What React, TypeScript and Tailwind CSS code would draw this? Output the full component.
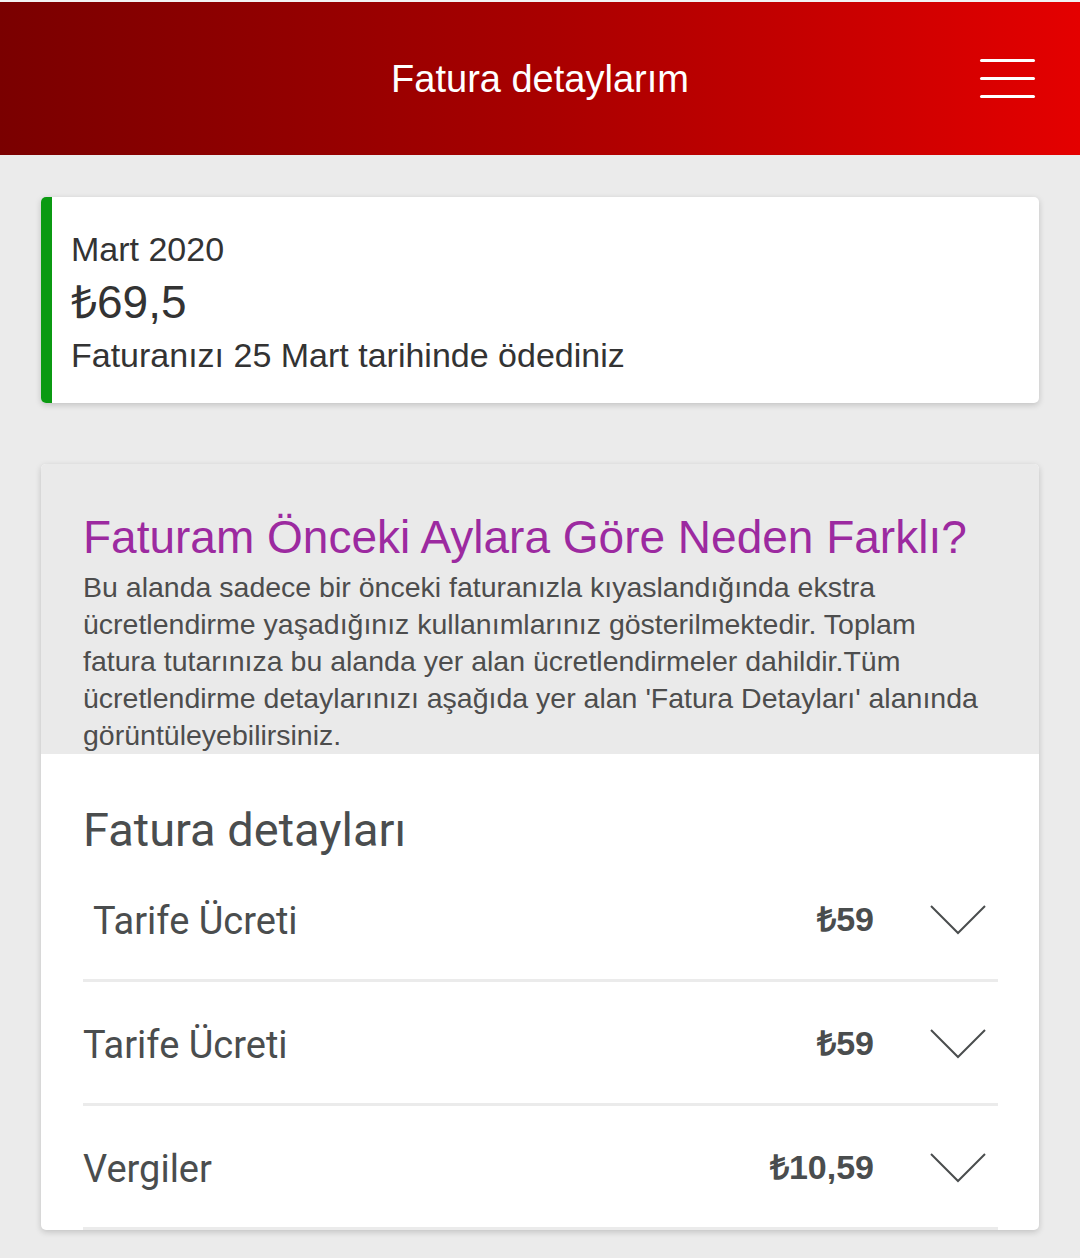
import React from 'react';

const vf = { fontFamily: '"Liberation Sans", Arial, sans-serif' };
const rb = { fontFamily: 'Roboto, "Noto Sans", sans-serif' };

interface Line {
  label: string;
  amount: string;
  indent?: boolean;
}

const lines: Line[] = [
  { label: 'Tarife Ücreti', amount: '₺59', indent: true },
  { label: 'Tarife Ücreti', amount: '₺59' },
  { label: 'Vergiler', amount: '₺10,59' },
];

const MenuIcon = () => (
  <div className="flex flex-col gap-[15px] w-[55px]">
    <span className="block h-[3px] rounded-full bg-white" />
    <span className="block h-[3px] rounded-full bg-white" />
    <span className="block h-[3px] rounded-full bg-white" />
  </div>
);

const Chevron = () => (
  <svg width="56" height="30" viewBox="0 0 56 30" fill="none">
    <path d="M1 1 L28 28 L55 1" stroke="#4a4d4e" strokeWidth="2" />
  </svg>
);

const DetailRow: React.FC<{ line: Line }> = ({ line }) => (
  <div className="flex items-center h-[124px] pt-[6px] border-b-[3px] border-[#ebebeb]">
    <span style={rb} className={`flex-1 text-[38px] text-[#4a4d4e] ${line.indent ? 'pl-[10px]' : ''}`}>
      {line.label}
    </span>
    <span style={vf} className="text-[34px] font-bold text-[#4a4d4e] pb-[4px]">{line.amount}</span>
    <span className="ml-[56px] mr-[12px] pb-[4px] flex items-center">
      <Chevron />
    </span>
  </div>
);

export default function App() {
  return (
    <div className="min-h-[1258px] w-[1080px] bg-[#ebebeb]">
      <div className="h-[2px] bg-[#f2f2f2]" />
      <header className="h-[153px] grid grid-cols-[1fr_auto_1fr] items-center bg-gradient-to-r from-[#7a0000] via-[#a80000] to-[#e40000]">
        <div />
        <h1 style={vf} className="text-[38px] text-white pt-[2px]">Fatura detaylarım</h1>
        <div className="flex justify-end pr-[45px]">
          <MenuIcon />
        </div>
      </header>

      <main className="px-[41px] pt-[42px] pb-[29px]">
        <section className="flex bg-white rounded-[5px] overflow-hidden shadow-[0_2px_6px_rgba(0,0,0,0.18)]">
          <div className="w-[11px] bg-[#0b9a12]" />
          <div style={vf} className="pl-[19px] pt-[32px] pb-[28px] text-[#333333]">
            <p className="text-[34px] leading-[40px] mb-[6px]">Mart 2020</p>
            <p className="text-[46px] leading-[54px] mb-[6px]">₺69,5</p>
            <p className="text-[34px] leading-[40px]">Faturanızı 25 Mart tarihinde ödediniz</p>
          </div>
        </section>

        <section className="mt-[61px] rounded-[5px] overflow-hidden bg-white shadow-[0_2px_6px_rgba(0,0,0,0.18)]">
          <div style={vf} className="bg-[#eaeaea] px-[42px] pt-[47px]">
            <h2 className="text-[46px] leading-[52px] text-[#9c2aa0]">Faturam Önceki Aylara Göre Neden Farklı?</h2>
            <p className="mt-[6px] text-[28.5px] leading-[37px] text-[#4d4d4d]">
              Bu alanda sadece bir önceki faturanızla kıyaslandığında ekstra ücretlendirme yaşadığınız kullanımlarınız gösterilmektedir. Toplam
              <br />
              fatura tutarınıza bu alanda yer alan ücretlendirmeler dahildir.Tüm ücretlendirme detaylarınızı aşağıda yer alan 'Fatura Detayları' alanında görüntüleyebilirsiniz.
            </p>
          </div>
          <div className="pl-[42px] pr-[41px] pt-[48px]">
            <h3 style={rb} className="text-[47px] leading-[56px] text-[#4a4d4e]">Fatura detayları</h3>
            {lines.map((line, i) => (
              <DetailRow key={i} line={line} />
            ))}
          </div>
        </section>
      </main>
    </div>
  );
}
